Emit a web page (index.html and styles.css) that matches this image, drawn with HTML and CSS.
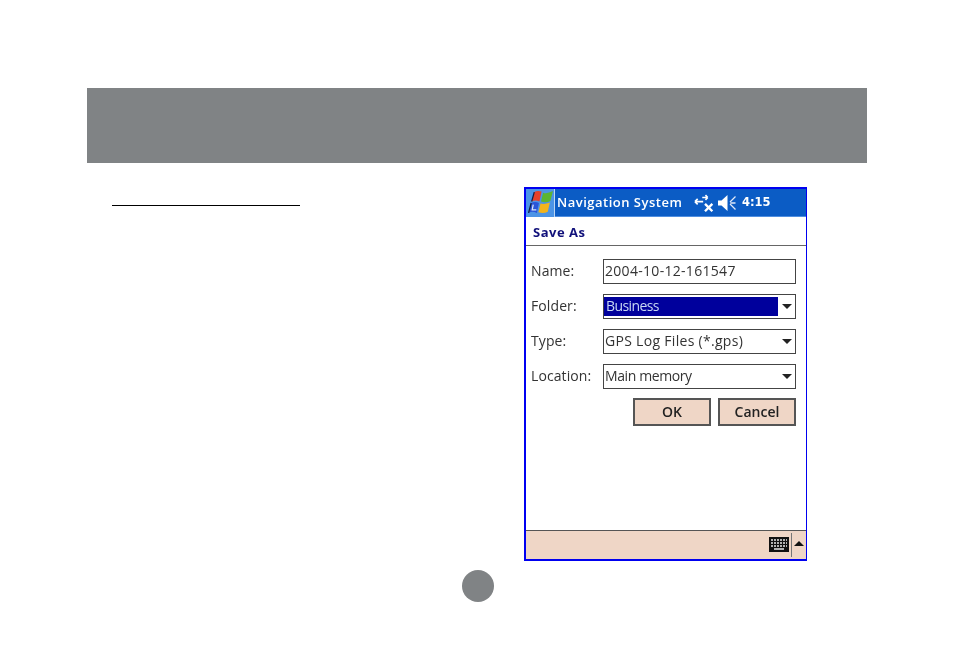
FILE: index.html
```html
<!DOCTYPE html>
<html lang="en">
<head>
<meta charset="utf-8">
<title>Save As</title>
<link rel="stylesheet" href="styles.css">
</head>
<body>
<div class="band"></div>
<main class="content">
  <div class="left"><div class="rule"></div></div>
  <section class="phone">
    <header class="titlebar">
      <div class="start">
        <svg width="27" height="27" viewBox="0 0 26 26">
          <path d="M7 3 Q10 1 14 2.500 L12 12 Q8 10 4.500 12 Z" fill="#e8402a"/>
          <path d="M15.500 3.500 Q19 5 25 2 L22.500 11.500 Q18 13.500 13.500 12 Z" fill="#5cb531"/>
          <path d="M4 13.500 Q8 11.500 11.500 13.500 L9.500 23 Q5 21 1.500 23 Z" fill="#2a55d8"/>
          <path d="M13 14 Q17 15 22 13 L20 22 Q16 24 11 22.500 Z" fill="#f2b41c"/>
          <path d="M7 3 L4.500 12 M4 13.500 L1.500 23" stroke="#10204a" stroke-width="1.200" fill="none"/>
          <path d="M6 15 L5 20 L9 20" stroke="#dce6f8" stroke-width="1.200" fill="none"/>
        </svg>
      </div>
      <span class="apptitle">Navigation System</span>
      <svg class="tray-net" width="22" height="20" viewBox="0 0 24 20">
        <path d="M1 8.500 H10 M1 8.500 L4 5.500 M1 8.500 L4 11.500 M9 4 H15 M15 4 L12.500 1.500 M15 4 L12.500 6.500" stroke="#fff" stroke-width="1.800" fill="none"/>
        <path d="M12 11 L20 19 M20 11 L12 19" stroke="#fff" stroke-width="2.600" fill="none"/>
      </svg>
      <svg class="tray-vol" width="20" height="18" viewBox="0 0 20 18">
        <path d="M1 6.500 H4.500 L10.500 1 V17 L4.500 11.500 H1 Z" fill="#fff"/>
        <path d="M18.500 2.500 L13 8 M13.500 9 H18.500 M13 10 L18.500 15.500" stroke="#dfe8f8" stroke-width="1.300" fill="none"/>
      </svg>
      <span class="clock">4:15</span>
    </header>
    <div class="caption">Save As</div>
    <form class="form">
      <div class="row"><span class="label">Name:</span><div class="field">2004-10-12-161547</div></div>
      <div class="row"><span class="label">Folder:</span><div class="field combo"><span class="selected">Business</span><span class="arrow"></span></div></div>
      <div class="row"><span class="label">Type:</span><div class="field combo"><span class="value wide">GPS Log Files (*.gps)</span><span class="arrow"></span></div></div>
      <div class="row"><span class="label">Location:</span><div class="field combo"><span class="value narrow">Main memory</span><span class="arrow"></span></div></div>
      <div class="buttons"><div class="btn ok">OK</div><div class="btn cancel">Cancel</div></div>
    </form>
    <footer class="taskbar">
      <svg class="kbd" width="20" height="15" viewBox="0 0 20 15">
        <rect width="20" height="15" fill="#111"/>
        <path d="M2 3 H18 M2 6 H18 M2 9 H18" stroke="#e8e8e8" stroke-width="1.500" stroke-dasharray="2 1"/>
        <path d="M5 12 H15" stroke="#e8e8e8" stroke-width="1.500"/>
      </svg>
      <div class="sep"></div>
      <div class="up"></div>
    </footer>
  </section>
</main>
<div class="pageno"></div>
</body>
</html>
```
FILE: styles.css
```css
* { box-sizing: border-box; }
html, body { margin: 0; height: 100%; background: #fff; }
body { padding-top: 88px; font-family: "Open Sans", "Noto Sans", sans-serif; overflow: hidden; }
.band { margin-left: 87px; width: 780px; height: 75px; background: #808385; }
.content { display: flex; margin-top: 24px; padding-left: 112px; }
.left { width: 412px; padding-top: 18px; }
.rule { width: 188px; height: 1px; background: #000; }
.phone { width: 283px; height: 374px; border: 2px solid #0000f0; border-right-width: 1px; display: flex; flex-direction: column; background: #fff; filter: blur(.3px); }
.titlebar { height: 28px; background: #0b5cc5; display: flex; align-items: center; color: #fff; border-bottom: 1px solid #4f8ee0; flex: none; }
.start { width: 29px; height: 28px; background: #4c94e6; border-right: 1px solid #bcd6f4; display: flex; align-items: center; justify-content: center; flex: none; }
.apptitle { font-size: 13px; font-weight: 600; margin: -2px 0 0 2px; width: 137px; white-space: nowrap; letter-spacing: .5px; }
.tray-net { flex: none; }
.tray-vol { flex: none; margin-left: 1px; }
.clock { font-weight: 700; margin: -1px 0 0 5px; font-family: "DejaVu Sans", sans-serif; font-size: 11.500px; }
.caption { height: 29px; flex: none; border-bottom: 1px solid #666; color: #10107a; font-size: 13px; font-weight: 700; padding: 6px 0 0 7px; line-height: 18px; letter-spacing: .5px; }
.form { flex: 1; padding: 13px 10px 0 5px; }
.row { display: flex; align-items: center; height: 25px; margin-bottom: 10px; font-size: 14px; color: #333; }
.label { width: 72px; flex: none; white-space: nowrap; position: relative; top: -1px; letter-spacing: .1px; }
.field { flex: 1; height: 25px; border: 1.500px solid #444; padding: 0 2px 2px 1px; font-size: 14px; line-height: 21px; white-space: nowrap; display: flex; align-items: center; color: #333; letter-spacing: .3px; }
.combo { padding-right: 0; letter-spacing: 0; }
.selected { flex: 1; height: 19px; line-height: 18px; background: #00009c; color: #c8d8f4; margin: 2px 0 0 -1px; padding-left: 2px; letter-spacing: -.6px; }
.value { flex: 1; }
.wide { letter-spacing: .3px; }
.narrow { letter-spacing: -.4px; }
.arrow { width: 0; height: 0; border-left: 5px solid transparent; border-right: 5px solid transparent; border-top: 5px solid #222; margin: 2px 3px 0 4px; flex: none; }
.buttons { display: flex; justify-content: flex-end; gap: 7px; margin-top: -1px; }
.btn { height: 28px; border: 2px solid #555; background: #efd6c6; font-size: 14px; font-weight: 600; text-align: center; line-height: 23px; color: #222; width: 78px; }
.taskbar { height: 29px; flex: none; background: #efd6c6; border-top: 1px solid #555; display: flex; align-items: center; justify-content: flex-end; }
.kbd { flex: none; margin: -2px 2px 0 0; }
.sep { width: 1px; height: 24px; background: #777; }
.up { width: 0; height: 0; border-left: 5px solid transparent; border-right: 5px solid transparent; border-bottom: 5px solid #111; margin: 0 2px 3px 2px; }
.pageno { width: 32px; height: 32px; border-radius: 50%; background: #808385; margin: 9px 0 0 462px; }
```
